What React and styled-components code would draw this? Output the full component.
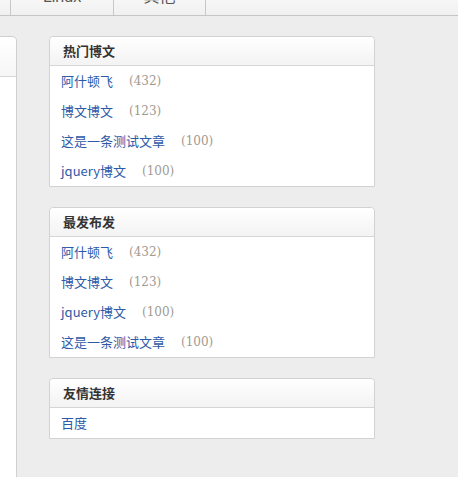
import styled, { createGlobalStyle } from "styled-components";

const GlobalStyle = createGlobalStyle`
  html, body {
    margin: 0;
    padding: 0;
    background: #ededed;
    font-family: "Noto Sans CJK SC", "Liberation Sans", sans-serif;
    font-size: 13px;
    overflow: hidden;
  }
`;

const hotList = [
  { name: "阿什顿飞", count: 432 },
  { name: "博文博文", count: 123 },
  { name: "这是一条测试文章", count: 100 },
  { name: "jquery博文", count: 100 },
];

const newList = [
  { name: "阿什顿飞", count: 432 },
  { name: "博文博文", count: 123 },
  { name: "jquery博文", count: 100 },
  { name: "这是一条测试文章", count: 100 },
];

const App = () => {
  return (
    <Page>
      <GlobalStyle />
      <NavBar>
        <NavInner>
          <NavTab $width={11} />
          <NavTab $width={103}>Linux</NavTab>
          <NavTab $width={92}>其他</NavTab>
        </NavInner>
      </NavBar>

      <Main>
        <LeftPanel>
          <LeftHead />
        </LeftPanel>

        <Side>
          <Card>
            <CardHead>热门博文</CardHead>
            {hotList.map((item, i) => (
              <Row key={i}>
                <RowLink>{item.name}</RowLink>
                <Count>({item.count})</Count>
              </Row>
            ))}
          </Card>

          <Card>
            <CardHead>最发布发</CardHead>
            {newList.map((item, i) => (
              <Row key={i}>
                <RowLink>{item.name}</RowLink>
                <Count>({item.count})</Count>
              </Row>
            ))}
          </Card>

          <Card>
            <CardHead>友情连接</CardHead>
            <Row>
              <RowLink>百度</RowLink>
            </Row>
          </Card>
        </Side>
      </Main>
    </Page>
  );
};

export default App;

// styled-components
const Page = styled.div`
  width: 458px;
  height: 477px;
  overflow: hidden;
`;

const NavBar = styled.div`
  height: 15px;
  overflow: hidden;
  background: linear-gradient(#f7f7f7, #f0f0f0);
  border-bottom: 1px solid #c4c4c4;
`;

const NavInner = styled.div`
  display: flex;
  margin-top: -21px;
  height: 36px;
`;

const NavTab = styled.div`
  width: ${(p) => p.$width}px;
  flex: none;
  height: 36px;
  line-height: 36px;
  text-align: center;
  border-right: 1px solid #c8c8c8;
  box-sizing: border-box;
  font-family: "Liberation Sans", "Noto Sans CJK SC", sans-serif;
  font-size: 16px;
  color: #555;
`;

const Main = styled.div`
  display: flex;
  padding-top: 20px;
`;

const LeftPanel = styled.div`
  width: 17px;
  height: 460px;
  flex: none;
  box-sizing: border-box;
  background: #fff;
  border: 1px solid #cfcfcf;
  border-left: none;
  border-top-right-radius: 5px;
`;

const LeftHead = styled.div`
  height: 39px;
  background: linear-gradient(#fff, #f6f6f6);
  border-top-right-radius: 5px;
  border-bottom: 1px solid #d6d6d6;
`;

const Side = styled.div`
  margin-left: 32px;
  width: 326px;
  display: flex;
  flex-direction: column;
  gap: 20px;
`;

const Card = styled.div`
  background: #fff;
  border: 1px solid #d2d2d2;
  border-radius: 4px 4px 0 0;
`;

const CardHead = styled.div`
  height: 28px;
  line-height: 28px;
  padding-left: 13px;
  background: linear-gradient(#ffffff, #f3f3f3);
  border-bottom: 1px solid #d6d6d6;
  border-radius: 4px 4px 0 0;
  font-weight: bold;
  font-size: 13px;
  color: #333;
`;

const Row = styled.div`
  height: 30px;
  line-height: 30px;
  padding-left: 11px;
  display: flex;
  align-items: center;
`;

const RowLink = styled.span`
  color: #2c5aa8;
  font-size: 13px;
  cursor: pointer;
`;

const Count = styled.span`
  margin-left: 16px;
  font-family: "DejaVu Serif", "Liberation Serif", serif;
  font-size: 12px;
  color: #a19a94;
`;
